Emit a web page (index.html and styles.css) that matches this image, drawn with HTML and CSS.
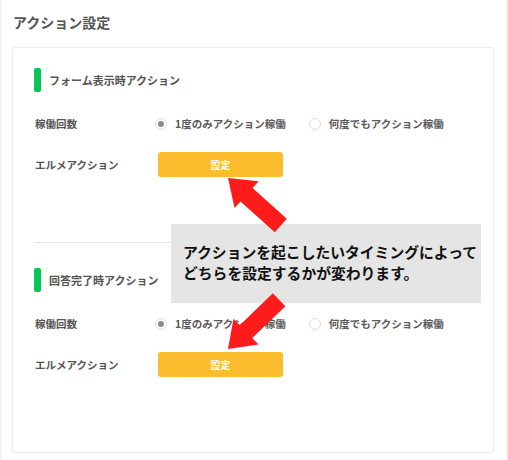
FILE: index.html
```html
<!DOCTYPE html>
<html lang="ja">
<head>
    <meta charset="UTF-8">
    <title>アクション設定</title>
    <link rel="stylesheet" href="styles.css">
</head>
<body>
    <div class="page">
        <h2 class="page-title">アクション設定</h2>
        <div class="card">
            <section class="block">
                <h3 class="block-title"><span class="bar"></span>フォーム表示時アクション</h3>
                <div class="row">
                    <div class="row-label">稼働回数</div>
                    <div class="radios">
                        <label class="radio checked"><span class="dot"></span>1度のみアクション稼働</label>
                        <label class="radio"><span class="dot"></span>何度でもアクション稼働</label>
                    </div>
                </div>
                <div class="row">
                    <div class="row-label">エルメアクション</div>
                    <button class="btn">設定</button>
                </div>
            </section>
            <hr class="divider">
            <section class="block">
                <h3 class="block-title"><span class="bar"></span>回答完了時アクション</h3>
                <div class="row">
                    <div class="row-label">稼働回数</div>
                    <div class="radios">
                        <label class="radio checked"><span class="dot"></span>1度のみアクション稼働</label>
                        <label class="radio"><span class="dot"></span>何度でもアクション稼働</label>
                    </div>
                </div>
                <div class="row">
                    <div class="row-label">エルメアクション</div>
                    <button class="btn">設定</button>
                </div>
            </section>
        </div>

        <!-- 説明の吹き出し -->
        <div class="note">アクションを起こしたいタイミングによって<br>どちらを設定するかが変わります。</div>
        <svg class="arrows" width="508" height="460" viewBox="0 0 508 460">
            <polygon transform="translate(228 178) rotate(-138)" points="0,0 -25,-18 -25,-9 -71,-9 -71,9 -25,9 -25,18"/>
            <polygon transform="translate(228 349) rotate(136)" points="0,0 -25,-18 -25,-9 -71,-9 -71,9 -25,9 -25,18"/>
        </svg>
    </div>
</body>
</html>
```

FILE: styles.css
```css
*{
    padding: 0;
    margin: 0;
    box-sizing: border-box;
}
body{
    font-family: "Noto Sans CJK JP", "Noto Sans", sans-serif;
    background: #fff;
    color: #555;
}
.page{
    position: relative;
    width: 508px;
    height: 460px;
    border-left: 2px solid #f3f3f3;
    border-right: 2px solid #f3f3f3;
    overflow: hidden;
}
.page-title{
    font-size: 14px;
    line-height: 20px;
    font-weight: bold;
    color: #555;
    padding: 12px 0 0 11px;
}
.card{
    margin: 15px 0 0 10px;
    width: 482px;
    border: 1px solid #ececec;
    border-radius: 3px;
    box-shadow: 0 0 2px rgba(0,0,0,.05);
    padding: 20px 20px 75px 21px;
}
.block-title{
    display: flex;
    align-items: center;
    height: 24px;
    font-size: 11px;
    font-weight: bold;
    color: #555;
    margin-bottom: 19px;
}
.bar{
    width: 7px;
    height: 24px;
    border-radius: 2px;
    background: #06c755;
    margin-right: 8px;
}
.row{
    display: flex;
    align-items: center;
    height: 25px;
    margin-bottom: 16px;
}
.row:last-child{
    margin-bottom: 0;
}
.row-label{
    width: 121px;
    padding-left: 1px;
    font-size: 10.5px;
    font-weight: bold;
    color: #555;
}
.radios{
    display: flex;
    gap: 23px;
}
.radio{
    display: flex;
    align-items: center;
    font-size: 10.5px;
    font-weight: bold;
    color: #5a5a5a;
}
.radio .dot{
    width: 12px;
    height: 12px;
    border: 1px solid #dcdcdc;
    border-radius: 50%;
    margin-right: 8px;
    display: flex;
    align-items: center;
    justify-content: center;
}
.radio.checked .dot::after{
    content: "";
    width: 6px;
    height: 6px;
    border-radius: 50%;
    background: #8a8a8a;
}
.btn{
    margin-left: 3px;
    width: 125px;
    height: 25px;
    border: none;
    border-radius: 3px;
    background: #fbbd2d;
    color: #fff;
    font-family: inherit;
    font-size: 10px;
    font-weight: bold;
}
.divider{
    border: none;
    border-top: 1px solid #e6e6e6;
    margin: 65px 0 25px;
}
.note{
    position: absolute;
    left: 169px;
    top: 224px;
    width: 310px;
    height: 79px;
    background: #e5e5e5;
    padding: 17px 0 0 12px;
    font-size: 14.8px;
    line-height: 21px;
    font-weight: bold;
    color: #111;
}
.arrows{
    position: absolute;
    left: -2px;
    top: 0;
    pointer-events: none;
}
.arrows polygon{
    fill: #fe1b1b;
}
```
